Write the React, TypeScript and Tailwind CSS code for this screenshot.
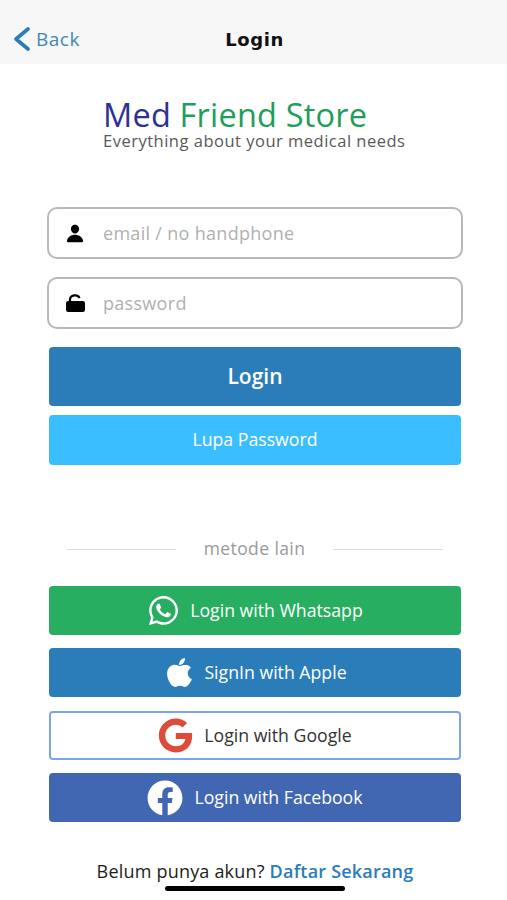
import { FaFacebook, FaGoogle, FaWhatsapp } from "react-icons/fa";
import { IoPerson, IoLogoApple } from "react-icons/io5";
import type { ReactNode } from "react";

function Field({ icon, text }: { icon: ReactNode; text: string }) {
  return (
    <div className="flex h-[52px] w-[416px] items-center rounded-[10px] border-2 border-[#b8b8b8] bg-white pl-[16px]">
      <span className="flex w-[20px] justify-center text-black">{icon}</span>
      <span className="ml-[18px] text-[18px] tracking-[0.3px] text-[#b0b0b0]">{text}</span>
    </div>
  );
}

function Social({ cls, icon, text, gap }: { cls: string; icon: ReactNode; text: string; gap: string }) {
  return (
    <div className={`flex h-[49px] w-[412px] items-center justify-center rounded-[4px] text-[17.7px] ${gap} ${cls}`}>
      {icon}
      <span>{text}</span>
    </div>
  );
}

export default function App() {
  return (
    <div className="relative flex h-[900px] w-[507px] flex-col items-center overflow-hidden bg-white pl-[3px] font-['Open_Sans','Noto_Sans',sans-serif]">
      <header className="relative -ml-[3px] flex h-[64px] w-[507px] shrink-0 items-center justify-center bg-[#f7f7f7]">
        <div className="absolute left-[13px] top-[26px] flex items-center">
          <svg width="17" height="24" viewBox="0 0 17 24" fill="none">
            <path d="M15 2 L3 12 L15 22" stroke="#2a7db8" strokeWidth="3.6" strokeLinecap="round" strokeLinejoin="round" />
          </svg>
          <span className="ml-[6px] pt-[1px] text-[19px] leading-[24px] tracking-[0.5px] text-[#3f88bd]">Back</span>
        </div>
        <span className="ml-[2px] mt-[15px] font-['DejaVu_Sans',sans-serif] text-[18px] font-bold tracking-[0.6px] text-[#111]">
          Login
        </span>
      </header>

      <div className="mt-[34px] flex h-[56px] w-[304px] flex-col">
        <div className="text-[32.5px] leading-[34px] tracking-[0.2px] whitespace-nowrap">
          <span className="text-[#2e3192]">Med </span>
          <span className="text-[#1f9e58]">Friend Store</span>
        </div>
        <div className="text-[16.5px] leading-[18px] tracking-[0.5px] text-[#58595b] whitespace-nowrap">
          Everything about your medical needs
        </div>
      </div>

      <div className="mt-[53px] flex flex-col items-center gap-[18px]">
        <Field icon={<IoPerson size={21} />} text="email / no handphone" />
        <Field
          icon={
            <svg width="19" height="18" viewBox="0 0 19 18">
              <path d="M4 8 V5.5 a5 4.2 0 0 1 9.6 -1.6" fill="none" stroke="#000" strokeWidth="2.2" />
              <rect x="0" y="7" width="19" height="11" rx="2.2" fill="#000" />
            </svg>
          }
          text="password"
        />
      </div>

      <div className="mt-[18px] flex h-[59px] w-[412px] items-center justify-center rounded-[4px] bg-[#2a7db8] pt-[1px] text-[21px] font-semibold text-white">
        Login
      </div>
      <div className="mt-[9px] flex h-[50px] w-[412px] items-center justify-center rounded-[4px] bg-[#3bbeff] pb-[2px] text-[17.7px] text-white">
        Lupa Password
      </div>

      <div className="mt-[72px] flex h-[24px] w-[376px] items-center justify-between">
        <div className="h-px w-[109px] bg-[#dcdcdc]" />
        <span className="pb-[2px] text-[17.5px] tracking-[0.4px] text-[#9a9a9a]">metode lain</span>
        <div className="h-px w-[110px] bg-[#dcdcdc]" />
      </div>

      <div className="mt-[25px] flex flex-col gap-[13px]">
        <Social cls="bg-[#27ae60] text-white" gap="gap-[10px]" icon={<FaWhatsapp size={33} />} text="Login with Whatsapp" />
        <Social cls="bg-[#2a7db8] text-white" gap="gap-[8px]" icon={<IoLogoApple size={33} />} text="SignIn with Apple" />
        <Social
          cls="mt-[1px] border-2 border-[#7ea5ec] bg-white text-[#333333]"
          gap="gap-[11px]"
          icon={<FaGoogle size={35} className="text-[#dd4b39]" />}
          text="Login with Google"
        />
        <Social cls="bg-[#4267b2] text-white" gap="gap-[11px]" icon={<FaFacebook size={36} />} text="Login with Facebook" />
      </div>

      <div className="mt-[36px] text-[18px] leading-[26px] tracking-[0.2px] text-[#1c1c1c]">
        Belum punya akun? <span className="font-semibold text-[#2a7db8]">Daftar Sekarang</span>
      </div>

      <div className="absolute left-[165px] top-[886px] h-[5px] w-[180px] rounded-full bg-black" />
    </div>
  );
}
